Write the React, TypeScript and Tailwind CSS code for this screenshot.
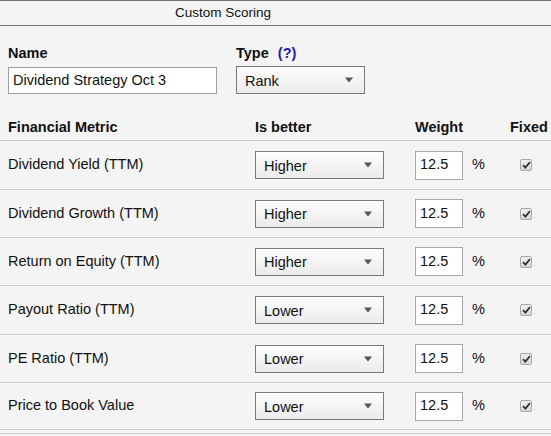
import React from "react";

const rows = [
  { name: "Dividend Yield (TTM)", better: "Higher", h: "h-[49px]" },
  { name: "Dividend Growth (TTM)", better: "Higher", h: "h-[48px]" },
  { name: "Return on Equity (TTM)", better: "Higher", h: "h-[48px]" },
  { name: "Payout Ratio (TTM)", better: "Lower", h: "h-[49px]" },
  { name: "PE Ratio (TTM)", better: "Lower", h: "h-[48px]" },
  { name: "Price to Book Value", better: "Lower", h: "h-[47px]" },
];

function Triangle() {
  return (
    <svg width="8" height="6" viewBox="0 0 8 6" className="shrink-0">
      <path d="M0 0.5 L8 0.5 L4 5.5 Z" fill="#555" />
    </svg>
  );
}

function Select({ value, w }: { value: string; w: string }) {
  return (
    <div
      className={`${w} h-[28px] flex items-center justify-between pl-[8px] pr-[11px] border border-[#7a7a7a] bg-gradient-to-b from-[#fdfdfd] to-[#ebebeb] text-[14.5px] text-[#111]`}
    >
      <span className="pt-[3px]">{value}</span>
      <Triangle />
    </div>
  );
}

function Check() {
  return (
    <div className="w-[12px] h-[12px] rounded-[2px] border border-[#a8a8a8] bg-gradient-to-b from-[#f0f0f0] to-[#d8d8d8] flex items-center justify-center">
      <svg width="9" height="8" viewBox="0 0 9 8">
        <path d="M1 4.2 L3.4 6.6 L8 1" stroke="#333" strokeWidth="1.8" fill="none" />
      </svg>
    </div>
  );
}

export default function App() {
  return (
    <div
      className="w-[551px] h-[436px] bg-[#f4f4f4] overflow-hidden text-[#111]"
      style={{ fontFamily: '"Liberation Sans", Arial, sans-serif' }}
    >
      <div className="h-[26px] border-t border-b border-[#787878] flex items-center pl-[175px] text-[13.5px] text-[#111]">
        Custom Scoring
      </div>

      <div className="flex pl-[8px] mt-[19px]">
        <div className="w-[228px] flex flex-col">
          <div className="h-[16px] leading-[16px] text-[14.5px] font-bold">Name</div>
          <div className="mt-[6px] w-[209px] h-[27px] border border-[#a0a0a0] bg-white flex items-center pl-[4px] text-[14.5px]">
            Dividend Strategy Oct 3
          </div>
        </div>
        <div className="flex flex-col">
          <div className="h-[16px] leading-[16px] text-[14.5px] font-bold">
            Type <span className="ml-[5px] text-[#1c1cb0]">(?)</span>
          </div>
          <div className="mt-[5px]">
            <Select value="Rank" w="w-[129px]" />
          </div>
        </div>
      </div>

      <div className="mt-[25px] grid grid-cols-[255px_160px_95px_1fr] h-[22px] border-b border-[#c8c8c8] text-[14.5px] font-bold leading-[16px]">
        <div className="pl-[8px]">Financial Metric</div>
        <div>Is better</div>
        <div>Weight</div>
        <div>Fixed</div>
      </div>

      {rows.map((r) => (
        <div
          key={r.name}
          className={`grid grid-cols-[255px_160px_95px_1fr] items-center ${r.h} border-b border-[#c8c8c8] text-[14.5px]`}
        >
          <div className="pl-[8px]">{r.name}</div>
          <div>
            <Select value={r.better} w="w-[129px]" />
          </div>
          <div className="flex items-center">
            <div className="w-[48px] h-[29px] border border-[#a8a8a8] bg-white flex items-center pl-[4px] text-[14.5px]">
              12.5
            </div>
            <span className="ml-[9px]">%</span>
          </div>
          <div className="pl-[10px]">
            <Check />
          </div>
        </div>
      ))}
      <div className="mt-[3px] border-t border-[#c8c8c8]" />
    </div>
  );
}
